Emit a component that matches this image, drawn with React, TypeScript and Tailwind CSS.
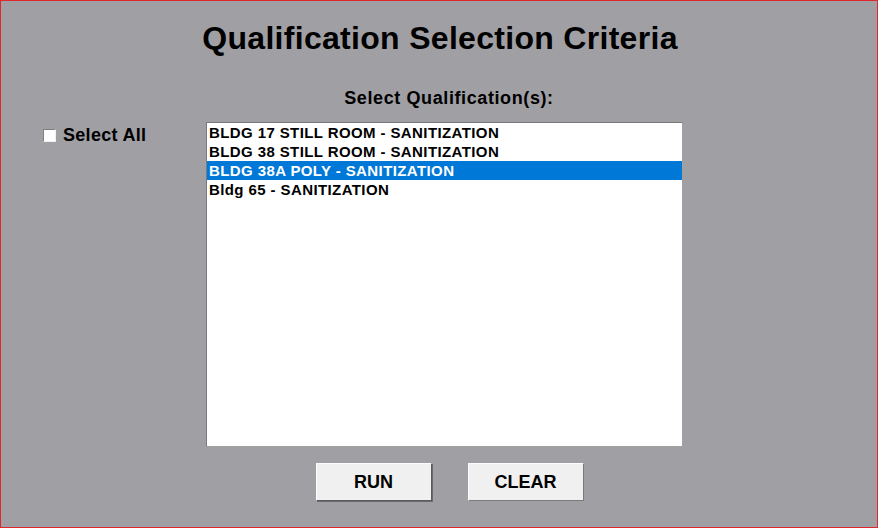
import { useState } from 'react'

const items = [
  'BLDG 17 STILL ROOM - SANITIZATION',
  'BLDG 38 STILL ROOM - SANITIZATION',
  'BLDG 38A POLY - SANITIZATION',
  'Bldg 65 - SANITIZATION',
]

export default function App() {
  const [selected, setSelected] = useState(2)
  const [all, setAll] = useState(false)

  return (
    <div className="w-[878px] h-[528px] bg-[#a09fa4] border border-[#e0282c] flex flex-col text-black font-['Liberation_Sans',Arial,sans-serif] font-bold">
      <h1 className="text-[32px] leading-none text-center mt-[21px] tracking-[0.3px] pl-[2px]">
        Qualification Selection Criteria
      </h1>
      <p className="text-[18px] leading-none text-center mt-[35px] pl-[20px] tracking-[0.6px]">Select Qualification(s):</p>

      <div className="flex mt-[15px]">
        {/* Left column */}
        <div className="w-[205px] pl-[42px] pt-[4px]">
          <label className="flex items-center gap-[7px] text-[18px] leading-none tracking-[0.3px]">
            <input
              type="checkbox"
              checked={all}
              onChange={e => setAll(e.target.checked)}
              className="appearance-none w-[13px] h-[13px] bg-white border border-t-[#808080] border-l-[#808080] border-r-[#f0f0f0] border-b-[#f0f0f0] m-0 mt-[1px]"
            />
            Select All
          </label>
        </div>

        {/* List */}
        <div className="w-[477px] h-[325px] bg-white border border-[#7a7a7a] border-r-[#a0a0a0] border-b-[#a0a0a0]">
          {items.map((item, i) => (
            <div
              key={item}
              onClick={() => setSelected(i)}
              className={`h-[19px] pl-[2px] text-[15px] leading-[19px] tracking-[0.4px] ${
                i === selected ? 'bg-[#0078d7] text-white' : 'text-black'
              }`}
            >
              {item}
            </div>
          ))}
        </div>
      </div>

      {/* Buttons */}
      <div className="flex justify-center gap-[36px] mt-[16px] pl-[21px]">
        <button className="w-[116px] h-[38px] bg-[#f0f0f0] border border-t-[#fdfdfd] border-l-[#fdfdfd] border-r-[#5a5a5a] border-b-[#5a5a5a] shadow-[1px_1px_0_#6a6a6a] text-[18px]">
          RUN
        </button>
        <button className="w-[116px] h-[38px] bg-[#f0f0f0] border border-t-[#fdfdfd] border-l-[#fdfdfd] border-r-[#7a7a7a] border-b-[#7a7a7a] text-[18px]">
          CLEAR
        </button>
      </div>
    </div>
  )
}
